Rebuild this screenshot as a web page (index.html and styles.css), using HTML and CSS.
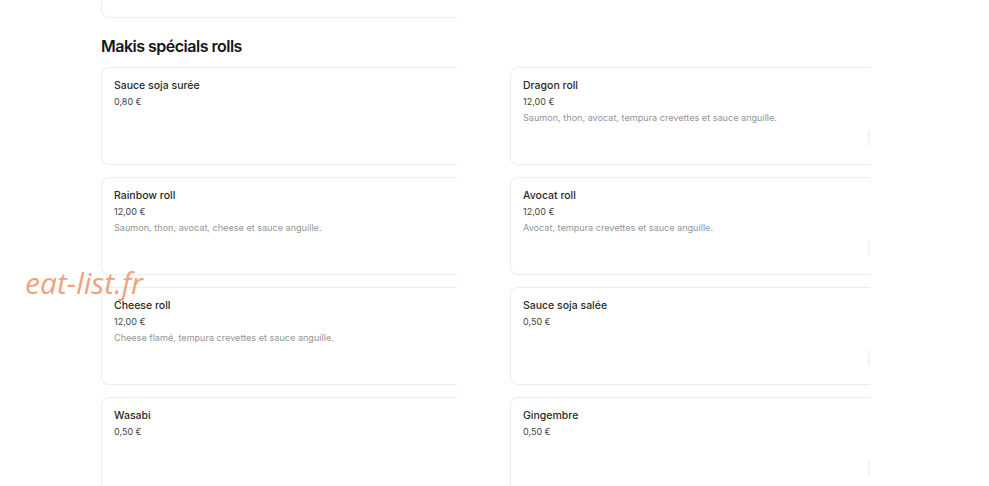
FILE: index.html
```html
<!DOCTYPE html>
<html lang="fr">
<head>
<meta charset="utf-8">
<link rel="stylesheet" href="styles.css">
</head>
<body>
<div class="page">
  <div class="prev"></div>
  <h2 class="section-title">Makis spécials rolls</h2>
  <div class="grid">
    <div class="card"><div class="name">Sauce soja surée</div><div class="price">0,80 €</div></div>
    <div class="card"><div class="name">Dragon roll</div><div class="price">12,00 €</div><div class="desc">Saumon, thon, avocat, tempura crevettes et sauce anguille.</div><span class="edge"></span></div>
    <div class="card"><div class="name">Rainbow roll</div><div class="price">12,00 €</div><div class="desc">Saumon, thon, avocat, cheese et sauce anguille.</div></div>
    <div class="card"><div class="name">Avocat roll</div><div class="price">12,00 €</div><div class="desc">Avocat, tempura crevettes et sauce anguille.</div><span class="edge"></span></div>
    <div class="card"><div class="name">Cheese roll</div><div class="price">12,00 €</div><div class="desc">Cheese flamé, tempura crevettes et sauce anguille.</div></div>
    <div class="card"><div class="name">Sauce soja salée</div><div class="price">0,50 €</div><span class="edge"></span></div>
    <div class="card"><div class="name">Wasabi</div><div class="price">0,50 €</div></div>
    <div class="card"><div class="name">Gingembre</div><div class="price">0,50 €</div><span class="edge"></span></div>
  </div>
</div>
<div class="watermark">eat-list.fr</div>
</body>
</html>
```
FILE: styles.css
```css
html, body {
  margin: 0;
  padding: 0;
  background: #ffffff;
  overflow: hidden;
}
body {
  width: 989px;
  height: 486px;
  font-family: Inter, "Noto Sans", sans-serif;
  color: #222;
  position: relative;
}
.page {
  padding-left: 101px;
}
.prev {
  box-sizing: border-box;
  width: 356px;
  height: 18px;
  border: 1px solid #eeeeee;
  border-top: none;
  border-right: none;
  border-radius: 0 0 0 8px;
}
.card {
  box-sizing: border-box;
  height: 98px;
  border: 1px solid #eeeeee;
  border-right: none;
  border-radius: 8px 0 0 8px;
  padding: 11px 12px;
  background: #fff;
  position: relative;
}
.section-title {
  margin: 16px 0 0 0;
  height: 33px;
  font-size: 16px;
  font-weight: 600;
  letter-spacing: -0.5px;
  line-height: 24px;
  color: #161616;
}
.grid {
  display: grid;
  grid-template-columns: 356px 360px;
  column-gap: 53px;
  row-gap: 12px;
}
.name {
  font-size: 10.5px;
  font-weight: 500;
  line-height: 14px;
  color: #2a2a2a;
}
.price {
  font-size: 9px;
  line-height: 12px;
  margin-top: 3px;
  color: #444;
}
.desc {
  font-size: 9.1px;
  line-height: 12px;
  margin-top: 4px;
  color: #959595;
}
.edge {
  position: absolute;
  right: 0;
  top: 62px;
  width: 2px;
  height: 16px;
  background: #f3f3f3;
  border-radius: 1px;
}
.watermark {
  position: absolute;
  left: 25px;
  top: 262px;
  font-family: "Open Sans", sans-serif;
  font-style: italic;
  font-weight: 400;
  font-size: 30px;
  color: #f0a27c;
  letter-spacing: 0;
}
```
